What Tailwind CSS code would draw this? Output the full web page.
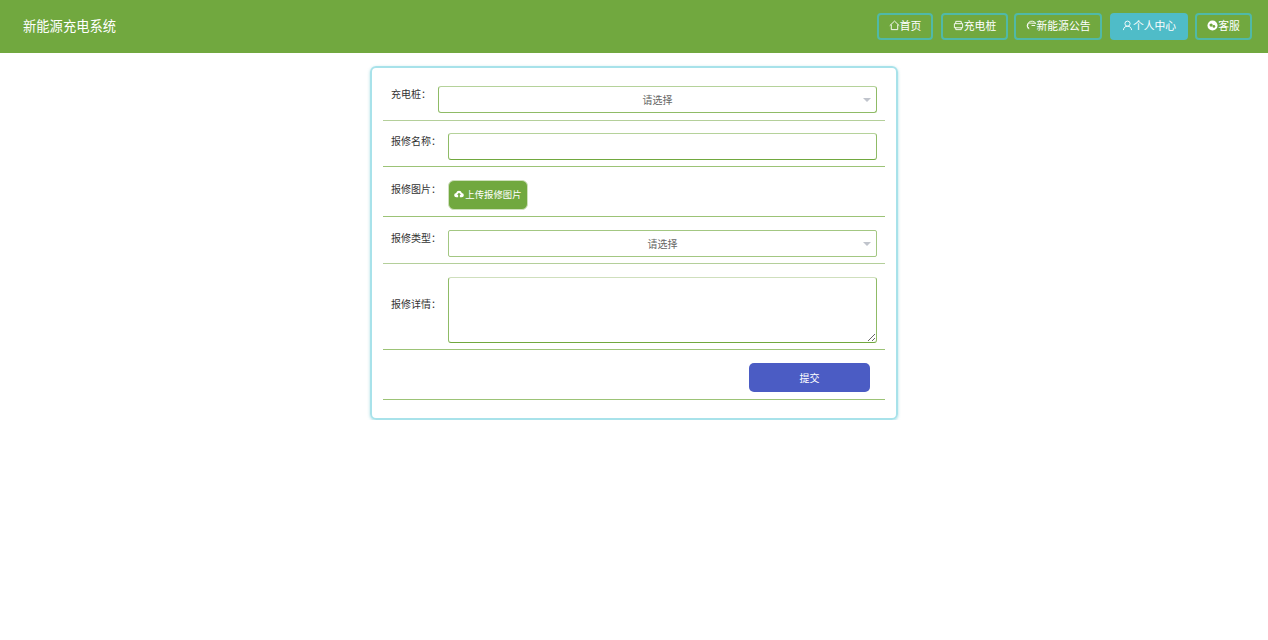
<!DOCTYPE html>
<html lang="zh-CN">
<head>
    <meta charset="UTF-8">
    <script src="https://cdn.jsdelivr.net/npm/@tailwindcss/browser@4"></script>
    <title>新能源充电系统</title>
</head>
<body class="bg-white font-['Noto_Sans_CJK_SC','Noto_Sans',sans-serif]">
    <header class="h-[53px] bg-[#71a83f] flex items-center justify-between pl-[23px] pr-4 text-white">
        <div class="text-[13.3px] pb-[2px]">新能源充电系统</div>
        <nav class="flex text-[10.8px]">
            <a class="h-[27px] w-[56px] pb-[2px] border-2 border-[#50b9a8] rounded flex items-center justify-center">
                <svg class="w-[11px] h-[11px]" viewBox="0 0 12 12" fill="none" stroke="currentColor" stroke-width="1"><path d="M.8 6.200 6 1.200l5.200 5M2.500 5v5.500h7V5"/></svg>首页
            </a>
            <a class="h-[27px] w-[67px] pb-[2px] ml-2 border-2 border-[#50b9a8] rounded flex items-center justify-center">
                <svg class="w-[11px] h-[11px]" viewBox="0 0 12 12" fill="none" stroke="currentColor" stroke-width="1"><path d="M3 4V1.500h6V4M1.500 4h9v4.500h-9zM3 8v2.500h6V8"/></svg>充电桩
            </a>
            <a class="h-[27px] w-[88px] pb-[2px] ml-[6px] border-2 border-[#50b9a8] rounded flex items-center justify-center">
                <svg class="w-[11px] h-[11px]" viewBox="0 0 12 12" fill="none" stroke="currentColor" stroke-width="1"><path d="M10.500 3.500A5 5 0 1 0 3 10M3.500 9A3 3 0 0 1 6 3.500h5M6 6h4"/></svg>新能源公告
            </a>
            <a class="h-[27px] w-[78px] pb-[2px] ml-2 bg-[#4fbcc8] rounded flex items-center justify-center">
                <svg class="w-[11px] h-[11px]" viewBox="0 0 12 12" fill="none" stroke="currentColor" stroke-width="1"><circle cx="6" cy="4" r="2.800"/><path d="M1.500 11c.5-3 2-4.200 4.500-4.200s4 1.200 4.500 4.200"/></svg>个人中心
            </a>
            <a class="h-[27px] w-[57px] pb-[2px] ml-[7px] border-2 border-[#50b9a8] rounded flex items-center justify-center">
                <svg class="w-[11px] h-[11px]" viewBox="0 0 12 12"><circle cx="6" cy="6" r="5.500" fill="currentColor"/><circle cx="4.500" cy="5.500" r="1.800" fill="#71a83f"/><circle cx="7.500" cy="7" r="1.500" fill="#71a83f"/></svg>客服
            </a>
        </nav>
    </header>

    <main class="w-[528px] h-[354px] mt-[13px] ml-[370px] border-2 border-[#a8e2ea] rounded-md px-[11px] pt-[5px] shadow-[0_1px_3px_rgba(79,188,200,0.5)] text-[10px] text-[#333]">
        <div class="flex h-[48px] pl-2 pr-2 pt-[13px] border-b border-[#b4cf9a]">
            <label class="w-[47px] mt-[1px] leading-[14px]">充电桩：</label>
            <div class="relative flex-1 h-[27px]">
                <select class="w-full h-full appearance-none bg-white border border-[#8fbb66] border-t-[#b5d29a] rounded-[3px] text-[10px] text-[#666] [text-align-last:center]">
                    <option>请选择</option>
                </select>
                <span class="absolute right-[6px] top-[12px] border-x-[4px] border-t-[4px] border-x-transparent border-t-[#c0c4cc]"></span>
            </div>
        </div>
        <div class="flex h-[46px] pl-2 pr-2 pt-3 border-b border-[#9cc376]">
            <label class="w-[57px] mt-[1px] leading-[14px]">报修名称：</label>
            <input type="text" class="flex-1 h-[27px] border border-[#8fbb66] border-t-[#b5d29a] border-b-[#71a83f] rounded-[3px]">
        </div>
        <div class="flex h-[50px] pl-2 pr-2 pt-[13px] border-b border-[#9cc376]">
            <label class="w-[57px] mt-[2px] leading-[14px]">报修图片：</label>
            <button class="w-[80px] h-[30px] pb-[2px] bg-[#71a83f] border border-[#cfe0bd] rounded-md text-white text-[9.4px] flex items-center justify-center gap-[1px]">
                <svg class="w-[10px] h-[10px]" viewBox="0 0 12 12" fill="currentColor"><path d="M3 10a2.600 2.600 0 0 1-.4-5.200 3.500 3.500 0 0 1 6.800 0A2.600 2.600 0 0 1 9 10H7V7h1.500L6 4.500 3.500 7H5v3z"/></svg>上传报修图片
            </button>
        </div>
        <div class="flex h-[47px] pl-2 pr-2 pt-[13px] border-b border-[#b4cf9a]">
            <label class="w-[57px] mt-[1px] leading-[14px]">报修类型：</label>
            <div class="relative flex-1 h-[27px]">
                <select class="w-full h-full appearance-none bg-white border border-[#a3c782] rounded-[2px] text-[10px] text-[#666] [text-align-last:center]">
                    <option>请选择</option>
                </select>
                <span class="absolute right-[6px] top-[12px] border-x-[4px] border-t-[4px] border-x-transparent border-t-[#c0c4cc]"></span>
            </div>
        </div>
        <div class="flex h-[86px] pl-2 pr-2 pt-[13px] border-b border-[#9cc376]">
            <label class="w-[57px] mt-[20px] leading-[14px]">报修详情：</label>
            <textarea class="flex-1 h-[66px] border border-[#8fbb66] border-t-[#cfdfbd] border-b-[#71a83f] rounded-[3px] block"></textarea>
        </div>
        <div class="flex justify-end h-[50px] pr-[15px] pt-[13px] border-b border-[#9cc376]">
            <button class="w-[121px] h-[29px] bg-[#4b5cc4] rounded-[5px] text-white text-[10px]">提交</button>
        </div>
    </main>
</body>
</html>
